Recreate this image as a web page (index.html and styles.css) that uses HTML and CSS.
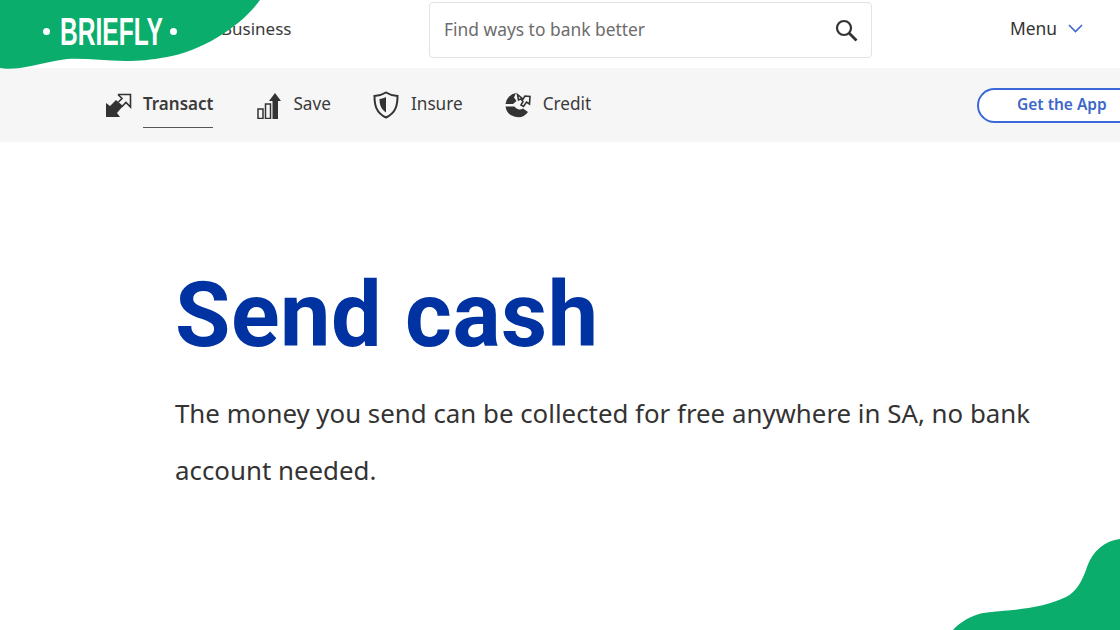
FILE: index.html
```html
<!DOCTYPE html>
<html lang="en">
<head>
<meta charset="utf-8">
<title>Send cash</title>
<link rel="stylesheet" href="styles.css">
</head>
<body>
<div class="page">
  <header class="topbar">
    <a class="biz">Business</a>
    <div class="search">
      <span class="search-text">Find ways to bank better</span>
      <svg class="search-icon" width="24" height="24" viewBox="0 0 24 24" fill="none" stroke="#333" stroke-width="2.2"><circle cx="10" cy="10" r="7"/><path d="M15 15l7.500 7.500" stroke-width="2.800"/></svg>
    </div>
    <div class="menu">
      <span>Menu</span>
      <svg width="15" height="9" viewBox="0 0 15 9" fill="none" stroke="#3d68c8" stroke-width="1.6"><path d="M1 1l6.500 6.500L14 1"/></svg>
    </div>
  </header>
  <nav class="subnav">
    <a class="tab active">
      <svg class="tab-icon" width="27" height="25" viewBox="0 0 27 25"><path d="M1 10l4 3 6-6 7 6-6 7 3 4H1z" fill="#333"/><path d="M13 1.500H25.500V14L21 9.500 16.500 14M13 1.500L17 5.500 13.500 9" fill="none" stroke="#333" stroke-width="1.600"/></svg>
      <span class="tab-label">Transact</span>
    </a>
    <a class="tab">
      <svg class="tab-icon" width="24" height="27" viewBox="0 0 24 27" fill="none" stroke="#333" stroke-width="1.500"><rect x="1" y="17" width="5" height="9.500"/><rect x="8.500" y="12" width="5" height="14.500"/><path d="M15.500 27V9h-3.500L18 1l6 8h-3v18z" fill="#333" stroke="none"/></svg>
      <span class="tab-label">Save</span>
    </a>
    <a class="tab">
      <svg class="tab-icon" width="26" height="28" viewBox="0 0 26 28" fill="none" stroke="#333" stroke-width="2"><path d="M13 1.500C9 4 5.500 4.800 1.500 5c0 9 1.500 17 11.500 21.500C23 22 24.500 14 24.500 5 20.500 4.800 17 4 13 1.500z"/><path d="M13 6c-2 1-4 1.700-6.500 2 0 5 1 10 6.500 13.500z" fill="#333" stroke="none"/></svg>
      <span class="tab-label">Insure</span>
    </a>
    <a class="tab">
      <svg class="tab-icon" width="26" height="26" viewBox="0 0 26 26"><path d="M11 1A12.500 12.500 0 0 0 .5 12H8l3.500-3L9 5.500z" fill="#333"/><path d="M.5 14.500A12.500 12.500 0 0 0 23 20l-5-3.500a6 6 0 0 1-8.500-2z" fill="#333"/><path d="M12.500 2.500L18 7l2-3 5 .5-.5 7.500-3-2-3 4.500-2.500-1.500 2-3.500-2-2.500-2.500 1z" fill="none" stroke="#333" stroke-width="1.600"/></svg>
      <span class="tab-label">Credit</span>
    </a>
    <a class="app-btn">Get the App</a>
  </nav>
  <main class="hero">
    <h1 class="title">Send cash</h1>
    <p class="lead">The money you send can be collected for free anywhere in SA, no bank account needed.</p>
  </main>
  <div class="logo">
    <svg class="logo-blob" width="262" height="72" viewBox="0 0 262 72"><path d="M0 0H260C250 14 236 26 218 37 200 48 183 54 167 57 150 60 140 61 125 61 105 61 85 58 67 59 50 61 35 66 20 68 12 69 5 69 0 68z" fill="#0aad6b"/></svg>
    <div class="logo-mark"><i class="dot"></i><span class="logo-text">BRIEFLY</span><i class="dot"></i></div>
  </div>
  <svg class="corner" width="170" height="92" viewBox="0 0 170 92"><path d="M170 1C155 3 143 12 137 29 132 44 126 54 116 59 100 67 80 70 63 72 50 73 40 74 33 75 22 77 10 84 3 92H170z" fill="#0aad6b"/></svg>
</div>
</body>
</html>
```
FILE: styles.css
```css
* { box-sizing: border-box; }
html, body { margin: 0; padding: 0; }
body { font-family: "Noto Sans", "Open Sans", sans-serif; color: #333; background: #fff; }
.page { position: relative; width: 1120px; height: 630px; overflow: hidden; }
.topbar { height: 68px; display: flex; align-items: center; padding: 0 37px 8px 221px; }
.biz { font-size: 17px; width: 208px; color: #3a3a3a; position: relative; top: -2px; }
.search { width: 443px; height: 56px; border: 1px solid #e3e3e3; border-radius: 4px; display: flex; align-items: center; justify-content: space-between; padding: 0 13px 0 14px; }
.search-text { font-size: 17.400px; color: #6c6c6c; position: relative; top: -1px; }
.search-icon { display: block; }
.menu { margin-left: auto; display: flex; align-items: center; gap: 11px; font-size: 17.400px; color: #333; position: relative; top: -2px; }
.subnav { height: 74px; background: #f6f6f6; display: flex; align-items: center; padding-left: 105px; }
.tab { display: flex; align-items: center; gap: 12px; margin-right: 42px; font-size: 17.200px; color: #3a3a3a; height: 74px; }
.tab-label { display: block; line-height: 45px; height: 46px; margin-top: 13px; align-self: flex-start; }
.active { gap: 11px; margin-right: 44px; }
.active .tab-label { font-size: 17px; line-height: 46px; font-weight: 600; border-bottom: 1px solid #555; height: 47px; }
.app-btn { margin-left: auto; width: 150px; height: 35px; margin-right: -7px; border: 2px solid #3d68d8; border-right: 0; border-radius: 18px 0 0 18px; background: #fff; color: #3d68c8; font-size: 15.500px; font-weight: 600; padding-left: 38px; line-height: 29px; white-space: nowrap; }
.hero { padding: 126px 80px 0 175px; }
.title { margin: 0; font-family: "Roboto", sans-serif; font-size: 90px; line-height: 96px; font-weight: 700; color: #0033a1; letter-spacing: .5px; }
.lead { margin: 21px 0 0; font-size: 25.850px; line-height: 57px; color: #333; width: 880px; }
.logo { position: absolute; left: 0; top: 0; width: 262px; height: 72px; }
.logo-blob { display: block; }
.dot { position: absolute; top: 28px; width: 7px; height: 7px; border-radius: 50%; background: #fff; }
.dot:first-child { left: 43px; }
.dot:last-child { left: 170px; }
.logo-text { position: absolute; left: 60px; top: 12px; font-family: "Liberation Sans", sans-serif; font-size: 39px; line-height: 40px; font-weight: 700; color: #fff; transform: scaleX(0.63); transform-origin: left top; white-space: nowrap; }
.corner { position: absolute; right: 0; bottom: 0; display: block; }
```
